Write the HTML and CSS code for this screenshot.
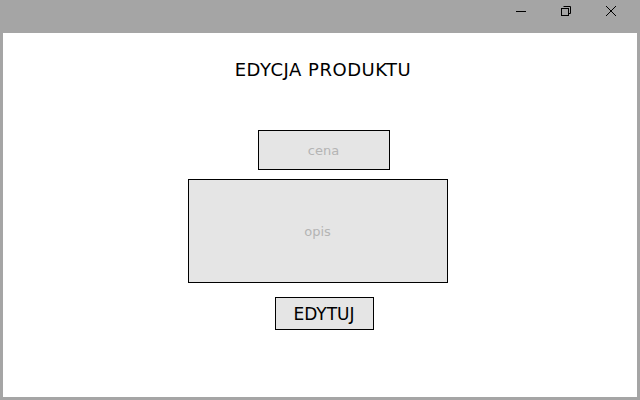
FILE: index.html
```html
<!DOCTYPE html>
<html lang="pl">
<head>
  <meta charset="UTF-8" />
  <title>Edycja produktu</title>
  <link rel="stylesheet" href="styles.css">
</head>
<body>
  <div class="window">
    <div class="titlebar">
      <span class="ctl">
        <svg width="12" height="12" viewBox="0 0 12 12"><path d="M1 6.5h10" stroke="#000" stroke-width="1"/></svg>
      </span>
      <span class="ctl">
        <svg width="12" height="12" viewBox="0 0 12 12" fill="none" stroke="#000" stroke-width="1">
          <path d="M3.5 1.5h7v7h-2"/>
          <rect x="1.5" y="3.5" width="7" height="7"/>
        </svg>
      </span>
      <span class="ctl">
        <svg width="12" height="12" viewBox="0 0 12 12"><path d="M1 1l10 10M11 1L1 11" stroke="#000" stroke-width="1"/></svg>
      </span>
    </div>

    <main class="content">
      <h1>EDYCJA PRODUKTU</h1>
      <form class="edit-form">
        <input class="price" type="text" placeholder="cena">
        <div class="desc">opis</div>
        <button type="button" class="submit">EDYTUJ</button>
      </form>
    </main>
  </div>
</body>
</html>
```

FILE: styles.css
```css
* {
  box-sizing: border-box;
}

body {
  margin: 0;
  width: 640px;
  height: 400px;
  background: #a5a5a5;
  font-family: "DejaVu Sans", Verdana, sans-serif;
  overflow: hidden;
}

.window {
  display: flex;
  flex-direction: column;
  height: 400px;
  padding: 0 3px 3px 3px;
}

.titlebar {
  height: 33px;
  display: flex;
  justify-content: flex-end;
  align-items: flex-start;
  padding-top: 5px;
  padding-right: 20px;
  gap: 33px;
}

.ctl {
  width: 12px;
  height: 12px;
  display: flex;
}

.content {
  flex: 1;
  background: #fff;
  display: flex;
  flex-direction: column;
  align-items: center;
}

h1 {
  margin: 26px 0 0 6px;
  font-size: 18px;
  font-weight: normal;
  letter-spacing: 0.5px;
  color: #000;
  line-height: 22px;
}

.edit-form {
  margin-top: 49px;
  display: flex;
  flex-direction: column;
  align-items: center;
}

.price {
  width: 132px;
  height: 40px;
  margin-left: 7px;
  border: 1px solid #000;
  background: #e5e5e5;
  text-align: center;
  font-family: inherit;
  font-size: 13px;
  outline: none;
}

.price::placeholder {
  color: #b4b4b4;
}

.desc {
  width: 260px;
  height: 104px;
  margin-top: 9px;
  margin-left: -5px;
  border: 1px solid #000;
  background: #e5e5e5;
  color: #b4b4b4;
  font-size: 13px;
  display: flex;
  align-items: center;
  justify-content: center;
}

.submit {
  width: 99px;
  height: 33px;
  margin-top: 14px;
  margin-left: 8px;
  border: 1px solid #000;
  background: #e5e5e5;
  color: #000;
  font-family: inherit;
  font-size: 17px;
  padding: 0;
}
```
